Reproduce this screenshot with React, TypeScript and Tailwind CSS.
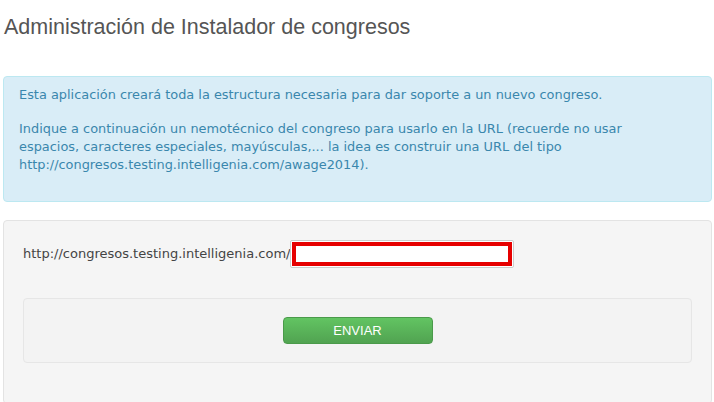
const dejavu = "font-['DejaVu_Sans',sans-serif]";

const App = () => {
  return (
    <div className="min-h-screen bg-white pl-[3px] pr-[2px]">
      <h1 className="pt-[14px] pl-px text-[21.5px] leading-[26px] font-normal text-[#555555] font-['Liberation_Sans',Arial,sans-serif]">
        Administración de Instalador de congresos
      </h1>

      <div
        className={`mt-[36px] rounded-[4px] border border-[#bce8f1] bg-[#d9edf7] pl-[15px] pr-[35px] pt-[9px] pb-[27px] text-[12.9px] leading-[18px] text-[#3a87ad] ${dejavu}`}
      >
        <p>
          Esta aplicación creará toda la estructura necesaria para dar soporte a
          un nuevo congreso.
        </p>
        <p className="mt-[16px]">
          Indique a continuación un nemotécnico del congreso para usarlo en la
          URL (recuerde no usar espacios, caracteres especiales, mayúsculas,...
          la idea es construir una URL del tipo
          http://congresos.testing.intelligenia.com/awage2014).
        </p>
      </div>

      <div className="mt-[18px] rounded-[4px] border border-[#e3e3e3] bg-[#f5f5f5] px-[19px] pt-[19px] pb-[40px]">
        <div className="flex h-[28px] items-center">
          <label className={`text-[13px] text-[#444444] ${dejavu}`}>
            http://congresos.testing.intelligenia.com/
          </label>
          <div className="rounded-[2px] border border-[#cccccc] bg-white p-px">
            <input
              type="text"
              className="block h-[24px] w-[220px] border-4 border-[#e60000] bg-white outline-none"
            />
          </div>
        </div>

        <div className="mt-[30px] flex justify-center rounded-[4px] border border-[#e6e6e6] bg-[#f3f3f3] pt-[18px] pb-[18px]">
          <button className="h-[27px] w-[150px] rounded-[4px] border border-[#4a9a4a] bg-gradient-to-b from-[#62c462] to-[#51a351] text-[13px] text-white font-['Liberation_Sans',Arial,sans-serif]">
            ENVIAR
          </button>
        </div>
      </div>
    </div>
  );
};

export default App;
